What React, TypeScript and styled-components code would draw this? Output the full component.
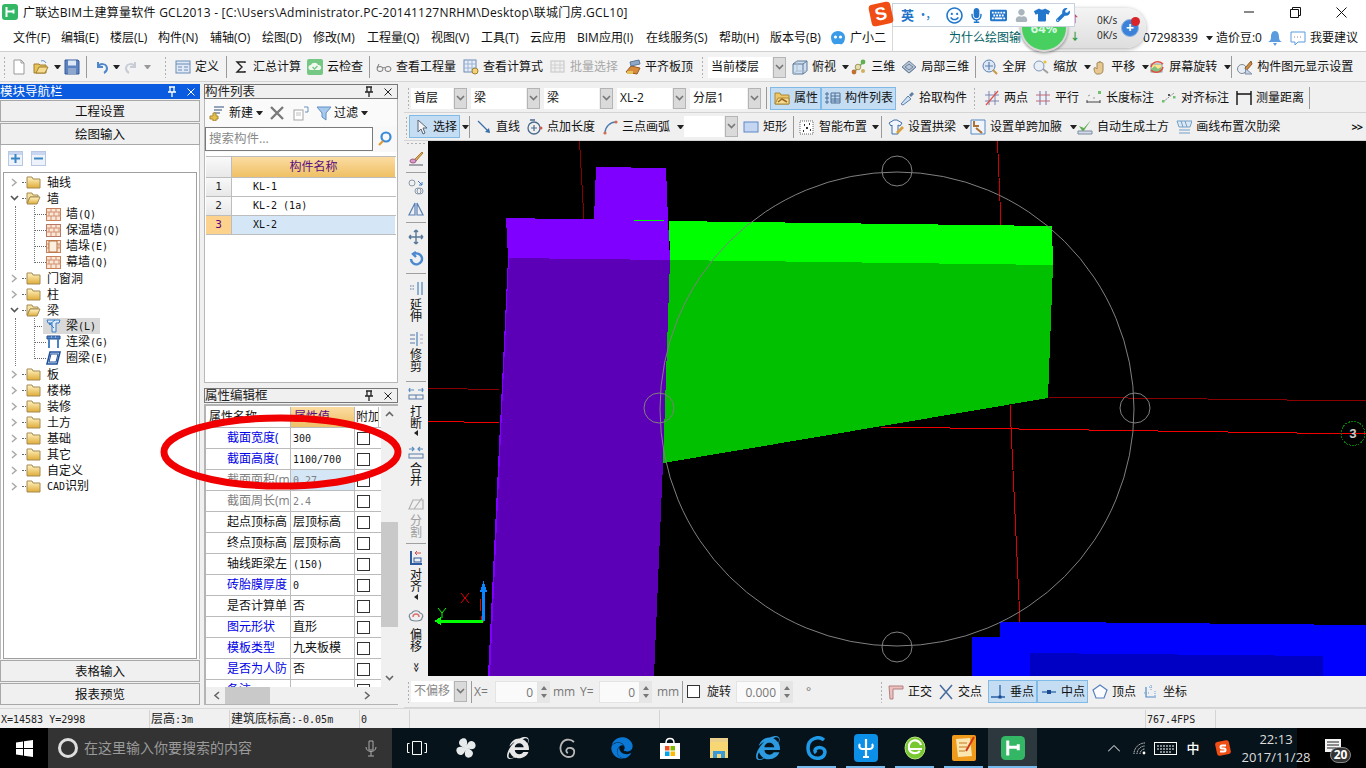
import React from "react";
import styled, { createGlobalStyle } from "styled-components";
import { FaEdge, FaInternetExplorer, FaKeyboard, FaMicrophone, FaRegSmile, FaTshirt, FaUser, FaWrench } from "react-icons/fa";

const CJK = `"Open Sans", "Noto Sans CJK SC", sans-serif`;
const MONO = `"DejaVu Sans Mono", "Noto Sans CJK SC", monospace`;

const Global = createGlobalStyle`
  html, body { margin: 0; padding: 0; overflow: hidden; background: #f0f0f0; }
  * { box-sizing: border-box; }
  svg { display: block; flex: none; }
`;

const Page = styled.div`
  position: relative; width: 1366px; height: 768px; overflow: hidden;
  display: flex; flex-direction: column; font: 12px/16px ${CJK}; color: #111; background: #f0f0f0;
`;

/* ---------- title & menu ---------- */
const TitleBar = styled.div`
  height: 24px; flex: none; display: flex; align-items: center; background: #fff; padding-left: 2px; padding-right: 2px;
`;
const TitleText = styled.div`margin-left: 5px; white-space: nowrap; font-size: 12px; letter-spacing: 0.02em; color: #111; padding-top: 1px;`;
const WinControls = styled.div`margin-left: auto; display: flex; align-items: center;`;
const WinBtn = styled.div<{ $w: number }>`width: ${p => p.$w}px; display: flex; justify-content: center;`;

const MenuBar = styled.div`
  height: 28px; flex: none; display: flex; align-items: center; background: #fff;
  padding-left: 13px; padding-top: 1px; border-bottom: 1px solid #cfcfcf; position: relative;
`;
const MenuItem = styled.div<{ $w?: number; $ml?: number }>`
  width: ${p => (p.$w ? `${p.$w}px` : "auto")}; flex: none; margin-left: ${p => p.$ml ?? 0}px; white-space: nowrap; overflow: hidden;
`;
const MenuSep = styled.div`width: 1px; height: 28px; background: #d8d8d8; margin-left: 6px;`;
const Tip = styled.div`margin-left: 56px; color: #00605f; font-size: 12px; width: 72px; white-space: nowrap; overflow: hidden;`;

/* ---------- toolbars ---------- */
const Band = styled.div<{ $h: number; $tone?: string; $pt?: number }>`
  height: ${p => p.$h}px; flex: none; display: flex; align-items: center; background: ${p => p.$tone ?? "#f3f3f3"};
  border-bottom: 1px solid #d4d4d4; white-space: nowrap; padding-top: ${p => p.$pt ?? 0}px;
`;
const Grip = styled.div<{ $ml?: number }>`
  width: 3px; height: 22px; flex: none; margin-left: ${p => p.$ml ?? 0}px;
  background-image: radial-gradient(#b0b0b0 0.8px, transparent 0.9px); background-size: 3px 4px;
`;
const Sep = styled.div<{ $ml?: number }>`
  width: 1px; height: 22px; flex: none; background: #9a9a9a; margin-left: ${p => p.$ml ?? 0}px;
`;
const Tool = styled.div<{ $ml?: number; $w?: number; $on?: boolean; $off?: boolean; $pl?: number }>`
  display: flex; align-items: center; gap: 4px; flex: none; height: 23px;
  margin-left: ${p => p.$ml ?? 0}px; width: ${p => (p.$w ? `${p.$w}px` : "auto")};
  padding-left: ${p => p.$pl ?? 0}px;
  color: ${p => (p.$off ? "#a8a8a8" : "#111")};
  background: ${p => (p.$on ? "#c4ddf3" : "transparent")};
  box-shadow: ${p => (p.$on ? "inset 0 0 0 1px #80bbe8" : "none")};
`;
const Caret = styled.div<{ $ml?: number; $off?: boolean }>`
  width: 7px; height: 4px; flex: none; margin-left: ${p => p.$ml ?? 0}px;
  border-left: 3.5px solid transparent; border-right: 3.5px solid transparent;
  border-top: 4px solid ${p => (p.$off ? "#999" : "#222")};
`;
const IconSlot = styled.div<{ $ml?: number }>`
  width: 16px; height: 16px; flex: none; margin-left: ${p => p.$ml ?? 0}px;
`;
const Combo = styled.div<{ $w: number; $ml?: number; $off?: boolean }>`
  width: ${p => p.$w}px; height: 21px; flex: none; display: flex; gap: 1px; margin-left: ${p => p.$ml ?? 0}px;
  color: ${p => (p.$off ? "#8a8a8a" : "#111")};
`;
const ComboText = styled.div`flex: 1; background: #fff; padding-left: 3px; line-height: 20px; overflow: hidden;`;
const ComboBtn = styled.div`
  width: 13px; flex: none; background: #dadada; border: 1px solid #b4b4b4; display: flex; align-items: center; justify-content: center;
`;
const Overflow = styled.div`margin-left: auto; padding-right: 4px; font: bold 11px/16px ${CJK}; letter-spacing: -1px; color: #111;`;

const Main = styled.div`height: 626px; flex: none; display: flex; padding-top: 2px; background: #f0f0f0;`;

/* ---------- panels ---------- */
const Side = styled.div<{ $w: number; $ml?: number }>`
  width: ${p => p.$w}px; flex: none; margin-left: ${p => p.$ml ?? 0}px; height: 621px; display: flex; flex-direction: column;
`;
const PanelHead = styled.div<{ $active?: boolean }>`
  height: 15px; flex: none; display: flex; align-items: center; justify-content: space-between; font-size: 12.5px; line-height: 15px;
  background: ${p => (p.$active ? "#0a5be0" : "#f0f0f0")}; color: ${p => (p.$active ? "#fff" : "#222")};
  border: ${p => (p.$active ? "none" : "1px solid #777")};
`;
const HeadBtns = styled.div`display: flex; align-items: center; gap: 9px; padding-right: 4px;`;
const NavBtn = styled.div`
  height: 22px; flex: none; display: flex; align-items: center; justify-content: center; background: #f0f0f0; padding-top: 2px;
  border: 1px solid #a8a8a8; font-size: 12.5px; margin-top: 1px;
`;
const NavBody = styled.div`
  flex: 1; background: #fff; display: flex; flex-direction: column; padding: 0 2px; border-left: 1px solid #bbb; border-right: 1px solid #bbb;
`;
const ExpandBar = styled.div`height: 27px; flex: none; display: flex; align-items: center; gap: 8px; padding-left: 5px;`;
const ExpandBtn = styled.div`
  width: 15px; height: 15px; background: linear-gradient(#c8d6f0 0 3px, #eef3fb 3px); border: 1px solid #b9c8e2; display: flex; align-items: center; justify-content: center;
`;
const TreeBox = styled.div`flex: 1; border: 1px solid #a0a0a0; padding-top: 1px; font-size: 12px;`;
const TreeRow = styled.div`height: 16px; display: flex; align-items: center; padding-left: 6px; position: relative;`;
const TreeLabel = styled.div<{ $ml: number }>`
  margin-left: ${p => p.$ml}px; line-height: 15px; white-space: nowrap;
`;
const LeadH = styled.div<{ $w: number; $ml?: number }>`
  width: ${p => p.$w}px; height: 0; border-top: 1px dotted #666; margin-left: ${p => p.$ml ?? 0}px; flex: none;
`;
const Group = styled.div`
  position: relative;
  &::before { content: ""; position: absolute; left: 11px; top: 0; bottom: 0; border-left: 1px dotted #777; }
  &::after { content: ""; position: absolute; left: 30px; top: 0; bottom: 7px; border-left: 1px dotted #777; }
`;
const ChildRow = styled.div`height: 16px; display: flex; align-items: center; padding-left: 30px; position: relative;`;
const ChildPlate = styled.div<{ $sel?: boolean }>`
  display: flex; align-items: center; height: 16px; padding-right: ${p => (p.$sel ? 4 : 0)}px; padding-left: ${p => (p.$sel ? 3 : 0)}px;
  margin-left: ${p => (p.$sel ? -3 : 0)}px; background: ${p => (p.$sel ? "#d9d9d9" : "transparent")};
`;
const Lat = styled.span`font: 10px/15px ${MONO};`;

const ListPanel = styled.div`
  height: 284px; flex: none; background: #fff; border: 1px solid #b8b8b8; border-top: none; display: flex; flex-direction: column;
`;
const MiniBar = styled.div`height: 27px; flex: none; display: flex; align-items: center; padding-left: 4px; background: #fafafa;`;
const SearchRow = styled.div`height: 26px; flex: none; display: flex; align-items: center; background: #f8f8f8;`;
const SearchInput = styled.div`
  width: 168px; height: 24px; border: 1px solid #7a7a7a; color: #8a8a8a; padding-left: 3px; line-height: 22px; background: #fff; font-size: 12.5px;
`;
const SearchBtn = styled.div`flex: 1; display: flex; justify-content: center;`;
const ListGrid = styled.div`margin: 4px 1px 0 1px; border-top: 1px solid #bbb;`;
const ListRow = styled.div<{ $h: number }>`display: grid; grid-template-columns: 26px 163px; height: ${p => p.$h}px; border-bottom: 1px solid #bdbdbd;`;
const IndexCell = styled.div<{ $sel?: boolean; $head?: boolean }>`
  background: ${p => (p.$sel ? "#fcd28c" : p.$head ? "linear-gradient(#fafafa,#e8e8e8)" : "linear-gradient(#f8f8f8,#e8e8e8)")};
  color: ${p => (p.$sel ? "#600080" : "#222")}; text-align: center; border-right: 1px solid #bdbdbd; font: 11px/18px ${MONO};
`;
const NameHead = styled.div`
  background: linear-gradient(#fbdca2, #efc064); color: #5a0f80; text-align: center; line-height: 20px; font-size: 12px;
`;
const NameCell = styled.div<{ $sel?: boolean }>`
  padding-left: 21px; font: 10px/18px ${MONO}; background: ${p => (p.$sel ? "#d5e7f7" : "#fff")}; white-space: pre;
`;
const Gap = styled.div`height: 5px; flex: none;`;
const PropBox = styled.div`
  flex: 1; margin-top: 1px; border: 2px solid #b4b4b4; background: #fff; display: grid;
  grid-template-columns: 175px 17px; grid-template-rows: 281px 17px; min-height: 0;
`;
const PropRows = styled.div`overflow: hidden; background: #fff; padding-top: 1px;`;
const PropRow = styled.div`
  display: grid; grid-template-columns: 85px 64px 24px; height: 21px; border-bottom: 1px solid #bbb;
`;
const HeadLabel = styled.div<{ $pl?: number }>`padding-left: ${p => p.$pl ?? 3}px; line-height: 20px; border-right: 1px solid #bbb; white-space: nowrap; overflow: hidden;`;
const HeadValue = styled.div`
  padding-left: 3px; line-height: 20px; color: #5a0f80; background: linear-gradient(#fbdca2, #efc064); border-right: 1px solid #bbb;
`;
const PropLabel = styled.div<{ $tone?: string }>`
  padding-left: 21px; line-height: 20px; color: ${p => p.$tone ?? "#111"}; white-space: nowrap; overflow: hidden; border-right: 1px solid #bbb;
`;
const PropValue = styled.div<{ $tone?: string; $bg?: string }>`
  padding-left: 2px; line-height: 20px; color: ${p => p.$tone ?? "#111"}; background: ${p => p.$bg ?? "#fff"}; white-space: nowrap; overflow: hidden; border-right: 1px solid #bbb;
`;
const PropCheck = styled.div`display: flex; align-items: center; padding-left: 2px; overflow: hidden;`;
const Check = styled.div`width: 13px; height: 13px; flex: none; border: 1px solid #333; background: #fff;`;
const VScroll = styled.div`background: #f0f0f0; display: flex; flex-direction: column; align-items: center; position: relative;`;
const ScrollArrow = styled.div<{ $auto?: boolean }>`height: 17px; flex: none; width: 100%; display: flex; align-items: center; justify-content: center; margin-top: ${p => (p.$auto ? "auto" : "0")};`;
const VThumb = styled.div`width: 100%; height: 105px; background: #c9c9c9; margin-top: 99px;`;
const HScroll = styled.div`background: #f0f0f0; display: flex; align-items: center; grid-column: 1; padding-left: 3px;`;
const HThumb = styled.div`width: 45px; height: 100%; background: #c9c9c9;`;
const HArrow = styled.div<{ $auto?: boolean }>`width: 16px; flex: none; margin-left: ${p => (p.$auto ? "auto" : "0")}; display: flex; justify-content: center; margin-right: ${p => (p.$auto ? "6px" : "0")};`;
const Corner = styled.div`background: #f0f0f0;`;

/* ---------- work area ---------- */
const Work = styled.div`flex: 1; display: flex; flex-direction: column; min-width: 0; margin-left: 6px;`;
const WorkMid = styled.div`height: 535px; flex: none; display: flex;`;
const VBar = styled.div`width: 24px; flex: none; background: #f0f0f0; display: flex; flex-direction: column; align-items: center;`;
const VGrip = styled.div`
  width: 20px; height: 3px; flex: none; margin-top: 1px;
  background-image: radial-gradient(#b0b0b0 0.8px, transparent 0.9px); background-size: 4px 3px;
`;
const VSep = styled.div<{ $mt: number }>`width: 20px; height: 1px; flex: none; background: #a0a0a0; margin-top: ${p => p.$mt}px;`;
const VIcon = styled.div<{ $mt: number }>`width: 16px; height: 16px; flex: none; margin-top: ${p => p.$mt}px;`;
const VText = styled.div<{ $mt: number; $off?: boolean }>`
  width: 12px; flex: none; font-size: 12px; line-height: 12px; margin-top: ${p => p.$mt}px; color: ${p => (p.$off ? "#a0a0a0" : "#111")}; text-align: center; word-break: break-all;
`;
const LeftTri = styled.div<{ $mt?: number }>`
  width: 0; height: 0; flex: none; margin-top: ${p => p.$mt ?? 0}px; border-top: 3px solid transparent; border-bottom: 3px solid transparent; border-right: 4px solid #222;
`;
const More = styled.div<{ $mt: number }>`margin-top: ${p => p.$mt}px; font: bold 9px/8px ${CJK}; transform: rotate(90deg); letter-spacing: -1px;`;
const CanvasSvg = styled.svg`width: 938px; height: 535px; background: #000;`;
const Label = styled.div<{ $w: number; $ml?: number; $tone?: string }>`
  width: ${p => p.$w}px; flex: none; margin-left: ${p => p.$ml ?? 0}px; color: ${p => p.$tone ?? "#777"};
`;
const Spin = styled.div<{ $w: number; $ml?: number }>`
  width: ${p => p.$w}px; height: 22px; flex: none; margin-left: ${p => p.$ml ?? 0}px; display: flex; color: #777;
`;
const SpinValue = styled.div`flex: 1; background: #fafafa; text-align: right; padding-right: 4px; line-height: 21px; border: 1px solid #e4e4e4;`;
const SpinBtns = styled.div`width: 12px; background: #e6e6e6; display: flex; flex-direction: column; align-items: center; justify-content: space-around; padding: 3px 0;`;
const SpinTri = styled.div<{ $up?: boolean }>`
  width: 0; height: 0; border-left: 3px solid transparent; border-right: 3px solid transparent;
  ${p => (p.$up ? "border-bottom: 4px solid #777;" : "border-top: 4px solid #777;")}
`;
const SmallBox = styled.div<{ $ml?: number }>`width: 13px; height: 13px; flex: none; border: 1.5px solid #333; background: #fff; margin-left: ${p => p.$ml ?? 0}px;`;

/* ---------- status ---------- */
const Status = styled.div`height: 20px; flex: none; display: flex; align-items: center; background: #f0f0f0; border-top: 1px solid #d8d8d8; white-space: nowrap;`;
const StatusCell = styled.div<{ $w: number }>`
  width: ${p => p.$w}px; flex: none; height: 18px; padding-left: 1px; line-height: 18px; border-right: 1px solid #d4d4d4; overflow: hidden; font-size: 12px; color: #222;
`;

/* ---------- taskbar ---------- */
const Taskbar = styled.div`height: 40px; flex: none; display: flex; align-items: stretch; background: #07131a; color: #e8e8e8;`;
const StartBtn = styled.div`width: 48px; flex: none; background: #000; display: flex; align-items: center; justify-content: center;`;
const SearchBox = styled.div`
  width: 344px; flex: none; background: #333; display: flex; align-items: center; padding-left: 10px; color: #9a9a9a; font-size: 14px;
`;
const Ring = styled.div`width: 20px; height: 20px; flex: none; border-radius: 50%; border: 3px solid #ddd;`;
const SearchHint = styled.div`margin-left: 6px; width: 281px; white-space: nowrap;`;
const Slot = styled.div<{ $ml?: number; $under?: boolean; $active?: boolean }>`
  width: 49px; flex: none; margin-left: ${p => p.$ml ?? 0}px; position: relative; display: flex; align-items: center; justify-content: center;
  background: ${p => (p.$active ? "#2c383d" : "transparent")};
  &::after {
    content: ""; position: absolute; bottom: 0; height: 2px; left: ${p => (p.$active ? 0 : 5)}px; right: ${p => (p.$active ? 0 : 5)}px;
    background: ${p => (p.$under || p.$active ? "#76b9ed" : "transparent")};
  }
`;
const Tray = styled.div<{ $ml: number; $w: number }>`
  width: ${p => p.$w}px; flex: none; margin-left: ${p => p.$ml}px; display: flex; align-items: center; justify-content: center;
`;
const Han = styled.div`font-size: 13px; color: #fff; font-weight: 500;`;
const Clock = styled.div`
  width: 70px; flex: none; margin-left: 9px; text-align: center; font-size: 13px; line-height: 18px; padding-top: 2px; color: #ddd; white-space: nowrap; position: relative; z-index: 1;
`;
const Notify = styled.div`flex: 1; background: #000; position: relative; display: flex; align-items: center; padding: 0 0 5px 28px; margin-left: -14px;`;
const Badge = styled.div`
  position: absolute; left: 33px; top: 19px; width: 21px; height: 16px; border-radius: 8px; background: #333; border: 1px solid #888;
  color: #fff; font: bold 12px/14px ${CJK}; text-align: center;
`;

/* ---------- overlays ---------- */
const SogouLogo = styled.div`
  position: absolute; left: 870px; top: 3px; width: 22px; height: 22px; background: #f04e14; border-radius: 4px; transform: rotate(-12deg);
  color: #fff; font: 900 18px/22px "Liberation Sans", sans-serif; text-align: center; z-index: 5;
`;
const SogouBar = styled.div`
  position: absolute; left: 892px; top: 3px; width: 183px; height: 24px; background: #fdfeff; border: 1px solid #c8d2dc;
  display: flex; align-items: center; color: #2277cc; z-index: 4; padding-left: 8px;
`;
const SogouItem = styled.div<{ $w: number }>`width: ${p => p.$w}px; flex: none; display: flex; justify-content: center; align-items: center;`;
const SogouEn = styled.div`font-size: 13px; font-weight: 700; color: #1f73c8; width: 16px;`;
const NetPill = styled.div`
  position: absolute; left: 1024px; top: 8px; width: 122px; height: 40px; border-radius: 20px; background: linear-gradient(#f4f4f4, #dedede);
  box-shadow: 0 1px 4px rgba(0,0,0,.35); z-index: 2; display: flex; flex-direction: column; align-items: flex-start; justify-content: center; padding-left: 73px;
  font: 10px/15px ${CJK}; color: #222;
`;
const NetBall = styled.div`
  position: absolute; left: -4px; top: -4px; width: 48px; height: 48px; border-radius: 50%; background: #47cf5f; border: 2px solid #d8d8d8;
  box-shadow: 0 1px 3px rgba(0,0,0,.4); color: #d8f8e0; font: 700 13px/44px ${CJK}; text-align: center;
`;
const NetArrow = styled.div<{ $top: number; $c: string }>`
  position: absolute; left: 46px; top: ${p => p.$top}px; font: bold 10px/10px ${CJK}; color: ${p => p.$c};
`;
const NetPlus = styled.div`
  position: absolute; right: 7px; top: 11px; width: 18px; height: 18px; border-radius: 50%; background: #3c82d8; border: 1px solid #8fb4df; color: #fff;
  font: bold 14px/15px ${CJK}; text-align: center;
`;
const NetDot = styled.div`position: absolute; right: 6px; top: 9px; width: 9px; height: 9px; border-radius: 50%; background: #d8232a;`;
const Ellipse = styled.svg`position: absolute; left: 150px; top: 405px; width: 260px; height: 95px; z-index: 6; pointer-events: none;`;

/* ---------- icons ---------- */
const S = (c: string, w = 1) => ({ fill: "none", stroke: c, strokeWidth: w });
const ICONS: Record<string, React.ReactNode> = {
  doc: <><path d="M3 1h7l3 3v11H3z" fill="#fff" stroke="#999" /><path d="M10 1v3h3" {...S("#999")} /></>,
  open: <><path d="M1 5h5l1 1h6v8H1z" fill="#e8c25a" stroke="#a08030" /><path d="M3 14l3-6h9l-3 6z" fill="#f6dc90" stroke="#a08030" /><path d="M8 2c2-1 4 0 5 2" {...S("#5a90d0")} /></>,
  save: <><path d="M1 1h13l1 1v13H1z" fill="#5d82c2" stroke="#3a5a98" /><rect x="4" y="1.5" width="8" height="5" fill="#dfe8f6" /><rect x="4" y="9" width="8" height="6" fill="#8fa6cd" /></>,
  undo: <path d="M4 3v5h5M4 8c2-4 8-4 9 1 0 2-1 4-3 5" {...S("#4f86cc", 2)} />,
  redo: <path d="M12 3v5H7M12 8c-2-4-8-4-9 1 0 2 1 4 3 5" {...S("#c8ccd4", 2)} />,
  define: <><rect x="1" y="2" width="14" height="12" fill="#dfe8f4" stroke="#6a8db8" /><path d="M1 5h14M3 8h4M3 11h4M9 8h4M9 11h4" {...S("#6a8db8")} /></>,
  sigma: <path d="M12 4V3H4l5 5-5 5h8v-1" {...S("#222", 1.4)} />,
  cloud: <><rect x="0" y="0" width="16" height="16" rx="2" fill="#74c884" /><path d="M4 11a2.5 2.5 0 0 1 0-5c1-3 6-3 7 0a2.5 2.5 0 0 1 1 5z" fill="#f2f8ef" /><path d="M5.5 8l2 2 3-3" {...S("#74c884", 1.3)} /></>,
  glasses: <><ellipse cx="4" cy="10" rx="3" ry="2.5" {...S("#777")} /><ellipse cx="12" cy="10" rx="3" ry="2.5" {...S("#777")} /><path d="M7 9c1-1 1-1 2 0M1 9l2-4" {...S("#777")} /></>,
  calc: <><rect x="1" y="1" width="12" height="12" fill="#e8eef8" stroke="#6c8ab5" /><path d="M1 5h12M1 9h12M5 1v12M9 1v12" {...S("#9db3d4")} /><circle cx="12" cy="12" r="3" fill="#f2d27a" stroke="#a08030" /></>,
  batch: <><rect x="1" y="2" width="13" height="11" fill="#f0f0f0" stroke="#c4c4c4" /><path d="M1 6h13M1 9h13M5 2v11M10 2v11" {...S("#d0d0d0")} /></>,
  flat: <><path d="M1 13l5-6 9 2-3 6z" fill="#d88b3c" stroke="#96591e" /><path d="M5 3l9-2 1 4-9 2z" fill="#8fa8c8" stroke="#5a7698" /><rect x="2" y="12" width="6" height="3" fill="#e6c25a" /></>,
  cube: <><path d="M1 5l4-3h10v10l-4 3H1z" fill="#cfe0f2" stroke="#5f7895" /><path d="M1 5h10v10M11 5l4-3" {...S("#5f7895")} /><path d="M1 15l4-3V2M5 12h10" {...S("#aabccd")} /></>,
  view3d: <><path d="M3 13l5-5 4-5" {...S("#7a7", 1.5)} /><circle cx="12" cy="3" r="2.4" fill="#60b050" /><circle cx="7" cy="8" r="2.8" fill="#e6e0a8" stroke="#a09860" /><circle cx="3" cy="13" r="2.4" fill="#c07030" /><circle cx="12" cy="12" r="2" fill="#d0b060" /></>,
  part3d: <><path d="M1 8l7-6 7 6-7 6z" fill="#b8c8da" stroke="#6d8199" /><path d="M4 8l4-3 4 3-4 3zM1 8l7 6 7-6" {...S("#6d8199")} /></>,
  full: <><circle cx="7" cy="7" r="6" fill="#dce8f8" stroke="#5f80ad" /><path d="M7 3v8M3 7h8" {...S("#5f80ad", 1.2)} /><path d="M11 11l4 4" {...S("#c89a40", 2)} /></>,
  zoom: <><circle cx="6" cy="7" r="5" fill="#e8eef6" stroke="#8098b8" /><path d="M10 10l5 4" {...S("#a0a0a0", 2)} /><circle cx="12" cy="3" r="1.6" fill="#e6c43a" /></>,
  pan: <><path d="M3 9c1-1 2 0 3 1V4c1-1 2-1 2 0V3c1-1 2 0 2 0v1c1-1 2 0 2 1v6c0 3-2 4-4 4H6c-2 0-3-3-3-6z" fill="#e8c890" stroke="#a08858" /></>,
  spin: <><rect x="2" y="5" width="11" height="8" fill="#ffe28a" stroke="#80a0c0" /><path d="M2 10l4-3 3 3 3-2v5H2z" fill="#80c080" /><path d="M2 8a7 7 0 0 1 12-3M14 8a7 7 0 0 1-12 3" {...S("#e05040", 1.5)} /></>,
  display: <><circle cx="5" cy="10" r="4.5" fill="#e8eef6" stroke="#808890" /><path d="M8 9l6-7 1 3-6 7z" fill="#d88a3c" stroke="#806030" /><path d="M9 10l6 5H8z" fill="#c8d4e4" stroke="#8090a8" /></>,
  prop: <><path d="M1 3h5l1 2h8v9H1z" fill="#efc768" stroke="#a88838" /><path d="M1 14l3-6h11v6z" fill="#f6dc90" stroke="#a88838" /><path d="M4 12l4-3 5 3" {...S("#a06820", 1.5)} /></>,
  list: <><path d="M1 3h2v2H1zM1 7h2v2H1zM1 11h2v2H1zM6 3h9v10H6z" {...S("#4e6f96")} /><path d="M6 6h9M6 9h9M6 11h9M10 3v10" {...S("#4e6f96")} /></>,
  pick: <><path d="M2 14l7-8 3 3-8 6z" fill="#cfe0f4" stroke="#5c7fa8" /><path d="M10 5l3-3 2 2-3 3z" fill="#5c7fa8" /></>,
  two: <><path d="M5 1v14M11 1v14M1 5h14M1 11h14" {...S("#7d86b3")} /><path d="M2 15L14 1" {...S("#e0504a", 1.2)} /></>,
  par: <><path d="M5 1v14M11 1v14" {...S("#6a6fb0")} /><path d="M1 5h14M1 11h14" {...S("#c06a78")} /></>,
  lenm: <><path d="M1 13v-3M14 13v-3M1 12h13" {...S("#444")} /><path d="M2 6l2-1M7 8h2" {...S("#999")} /><rect x="12" y="1" width="3" height="3" fill="#70c070" /></>,
  alim: <><path d="M2 12L13 3" {...S("#888")} strokeDasharray="2 1" /><rect x="1" y="10" width="2.5" height="2.5" fill="#70c070" /><rect x="12" y="6" width="2.5" height="2.5" fill="#70c070" /><rect x="7" y="4" width="2" height="2" fill="#555" /></>,
  meas: <path d="M1 1v14M15 1v14M1 4h14" {...S("#111", 1.4)} />,
  select: <path d="M5 1v12l3-3 2 5 2-1-2-5h4z" fill="#f4f6fa" stroke="#5a6470" />,
  line: <><path d="M2 2l11 11" {...S("#3a6ea8", 1.3)} /><path d="M14 14l-5-1 4-4z" fill="#3a6ea8" /></>,
  addl: <><circle cx="7" cy="9" r="6" {...S("#4c6a8c", 1.3)} /><path d="M7 6v6M4 9h6" {...S("#4c6a8c", 1.2)} /><path d="M3 1h5" {...S("#4c6a8c", 1.5)} /><circle cx="14" cy="9" r="1.5" fill="#d05a4a" /></>,
  arc: <><path d="M3 14C3 8 8 3 14 3" {...S("#4e7fb2", 1.3)} /><circle cx="3" cy="14" r="1.6" fill="#d07050" /><circle cx="14" cy="3" r="1.6" fill="#d07050" /></>,
  rect: <rect x="1" y="3" width="14" height="10" fill="#c4d6f2" stroke="#5e86c6" />,
  smart: <><rect x="1" y="2" width="13" height="13" fill="#fff" stroke="#666" strokeDasharray="1 1" /><path d="M5 6h1M10 5h1M7 9h2M4 12h1M11 11h1" {...S("#333", 2)} /></>,
  arch: <><path d="M1 4l5-3h3l5 3-2 3-2-1v9H4V6L3 7z" fill="#f2f6fc" stroke="#3f70a8" /><path d="M8 13l6-6 2 2-6 6z" fill="#d8a040" /></>,
  haunch: <><path d="M1 1h14v14H1z" fill="#eef4fc" stroke="#5a88c0" /><path d="M4 2v5h5M6 9l6 5" {...S("#b0702e", 2)} /></>,
  auto: <><path d="M2 7l4 6L14 1l-7 8z" fill="#60ac50" /><path d="M1 12h14v3H1z" fill="#d4dce8" stroke="#7a8ca0" /></>,
  rib: <><path d="M1 2h15l-2 6H3z" fill="#dce8f4" stroke="#72a0c8" /><path d="M3 14h11M5 2l2 6M9 2l2 6M3 11h11" {...S("#72a0c8")} /></>,
  ortho: <><path d="M1 2h14v3H5v10H2z" fill="#efc0c0" stroke="#b08080" /></>,
  cross: <path d="M2 1l12 14M14 1L2 15" {...S("#4a6fa0", 1.6)} />,
  perp: <><path d="M10 1v12M1 13h14" {...S("#2a62a8", 1.3)} /><rect x="8.5" y="11.5" width="3" height="3" fill="#1a4a90" /></>,
  mid: <><path d="M1 8h14" {...S("#2a62a8", 1.3)} /><rect x="6" y="6" width="4" height="4" fill="#1a4a90" /></>,
  vert: <path d="M8 1l7 5-3 8H4L1 6z" fill="#fafcff" stroke="#5682c0" strokeWidth="1.2" />,
  coord: <><path d="M3 3v10h10" {...S("#508cc8", 1.2)} /><path d="M8 1v5M6 3h4M12 7v5M1 9h5" {...S("#6aa0d8")} strokeDasharray="1 1" /></>,
  newb: <><path d="M5 2h10M5 5h8M5 8h6" {...S("#7488a4", 1.3)} /><path d="M4 8v3H1v3h3v2h3v-2h2v-3H7V8z" fill="#e6c04c" stroke="#a88830" /></>,
  del: <path d="M2 2l12 12M14 2L2 14" {...S("#7a7a7a", 2.4)} />,
  copy: <><rect x="1" y="5" width="9" height="10" fill="#fff" stroke="#a4a4a4" /><path d="M3 8h5M3 10h5" {...S("#c0c0c0")} /><path d="M11 2h4v5h-3" {...S("#6f92bd")} /></>,
  filter: <path d="M1 2h14l-5 6v7l-4-3V8z" fill="#a8c8ec" stroke="#5f8fc4" />,
  mag: <><circle cx="9" cy="6" r="4.5" {...S("#3b8ad8", 2.2)} /><path d="M6 10l-4 4" {...S("#e09a30", 2.2)} /></>,
  brush: <><path d="M6 10l8-8 1 1-7 8z" fill="#e0a860" stroke="#a87a30" /><ellipse cx="5" cy="11" rx="3" ry="2" fill="#d89ad0" stroke="#a06080" /><path d="M1 15h14" {...S("#556")} /></>,
  circ: <><circle cx="4" cy="4" r="3" {...S("#8a9aac")} /><circle cx="10" cy="12" r="3" {...S("#8a9aac")} /><circle cx="12" cy="12" r="3" {...S("#8a9aac")} /><path d="M10 2l4 4M14 3v3h-3" {...S("#3e78c4")} /></>,
  mirror: <><path d="M7 2v12H1zM9 2v12h6z" {...S("#5880b8", 1.2)} /></>,
  move: <path d="M8 1v14M1 8h14M8 1L6 3M8 1l2 2M8 15l-2-2M8 15l2-2M1 8l2-2M1 8l2 2M15 8l-2-2M15 8l-2 2" {...S("#587898", 1.4)} />,
  rot: <path d="M3 8a5.5 5.5 0 1 0 3-5M8 1L5 3l3 3" {...S("#4a88d0", 2.4)} />,
  ext: <><path d="M2 5h5M2 8h5" {...S("#5a7aa8")} strokeDasharray="1.5 1" /><path d="M10 1v13M14 1v13" {...S("#5a8cc0", 1.3)} /></>,
  trim: <><path d="M2 4h5M2 8h5M2 12h5" {...S("#5a7aa8")} /><path d="M9 1v14" {...S("#5a8cc0", 1.3)} /><path d="M12 4h3M12 8h3M12 12h3" {...S("#aac")} /></>,
  brk: <><path d="M1 4h5M10 4h5M2 2L1 4l1 2M14 2l1 2-1 2" {...S("#5a8cc0", 1.2)} /><rect x="1" y="9" width="14" height="4" {...S("#5a7aa8")} /><path d="M8 9v4" {...S("#5a7aa8")} /></>,
  merge: <><path d="M1 4h5M15 4h-5M4 2l2 2-2 2M12 2l-2 2 2 2" {...S("#5a8cc0", 1.2)} /><rect x="1" y="9" width="14" height="4" {...S("#5a7aa8")} /></>,
  split: <><path d="M1 14l4-9h10v9zM6 14l8-11" {...S("#b0b0b0", 1.2)} /></>,
  align: <><path d="M3 1v14M3 14h11" {...S("#2e5aa0", 2)} /><path d="M13 3H7M9 1L7 3l2 2" {...S("#d05050")} /><rect x="6" y="8" width="7" height="4" {...S("#2e5aa0")} /></>,
  offs: <><path d="M2 10a3 3 0 0 1 2-5c1-3 7-3 8 0a3 3 0 0 1 2 5c0 2-2 3-6 3s-6-1-6-3z" {...S("#7a8898", 1.2)} /><path d="M5 9c0-4 6-4 6 0" {...S("#e07070", 1.5)} /></>,
  close: <path d="M1.5 1.5l7 7M8.5 1.5l-7 7" {...S("currentColor", 1)} />,
};
const Ico = ({ n, s = 16 }: { n: string; s?: number }) => (
  <svg width={s} height={s} viewBox="0 0 16 16">{ICONS[n]}</svg>
);
const Chevron = ({ dir = "down", c = "#777" }: { dir?: string; c?: string }) => {
  const d = { down: "M1 2l3.5 3.5L8 2", up: "M1 6l3.5-3.5L8 6", left: "M6 1L2 4.5 6 8", right: "M2 1l4 3.5L2 8" }[dir]!;
  return <svg width="9" height="9" viewBox="0 0 9 9"><path d={d} fill="none" stroke={c} strokeWidth="1.6" /></svg>;
};
const Pin = () => (
  <HeadBtns>
    <svg width="10" height="12" viewBox="0 0 10 12"><path d="M2 1h6M3 1v5M7 1v5M1 6h8M5 6v5" fill="none" stroke="currentColor" strokeWidth="1.3" /></svg>
    <svg width="10" height="10" viewBox="0 0 10 10">{ICONS.close}</svg>
  </HeadBtns>
);
const FolderIcon = ({ open }: { open?: boolean }) => (
  <svg width="15" height="13" viewBox="0 0 15 13">
    <defs><linearGradient id="fy" x1="0" y1="0" x2="0" y2="1"><stop offset="0" stopColor="#fff4c4" /><stop offset="1" stopColor="#e0ac38" /></linearGradient></defs>
    {open
      ? <><path d="M1 1h5l1 2h5v2H4L1 11z" fill="#f6e2a0" stroke="#a48a50" /><path d="M4 5h10l-3 7H1z" fill="url(#fy)" stroke="#a48a50" /></>
      : <><path d="M1 1h5l1 2h7v9H1z" fill="url(#fy)" stroke="#a48a50" /></>}
  </svg>
);
const WallIcon = ({ v = 0 }: { v?: number }) => (
  <svg width="15" height="13" viewBox="0 0 15 13">
    <rect x="0.5" y="0.5" width="14" height="12" fill="#fbe6d6" stroke={v === 1 ? "#b87868" : "#c88058"} />
    <path d="M1 4h14M1 8h14M5 1v3M10 1v3M3 4v4M8 4v4M13 4v4M5 8v4M10 8v4" fill="none" stroke="#d09070" />
    {v === 2 && <rect x="3" y="1" width="8" height="11" fill="#fbf0e0" stroke="#b87040" />}
  </svg>
);
const BeamIcon = ({ v = 0 }: { v?: number }) => (
  <svg width="15" height="14" viewBox="0 0 15 14">
    {v === 0 && <><path d="M1 1h13l-1 3h-3v9H6V4H2z" fill="#dcecfa" stroke="#3a7ac4" /><path d="M3 4l5 5M9 1l-6 5" fill="none" stroke="#3a7ac4" /></>}
    {v === 1 && <><path d="M1 1h13v3H1z" fill="#4a82c8" stroke="#26508c" /><path d="M3 4v9M12 4v9" fill="none" stroke="#4a82c8" strokeWidth="2" /><path d="M5 2h1M9 2h1" stroke="#dde" /></>}
    {v === 2 && <><path d="M4 1h10l-3 12H1z" fill="#dcecfa" stroke="#20509c" strokeWidth="1.6" /><path d="M5 3h7l-2 8H3z" fill="#fff" stroke="#20509c" /></>}
  </svg>
);

/* ---------- data ---------- */
const MENU: [string, number][] = [["文件(F)", 48], ["编辑(E)", 49], ["楼层(L)", 48], ["构件(N)", 52], ["辅轴(O)", 52], ["绘图(D)", 51], ["修改(M)", 54], ["工程量(Q)", 64], ["视图(V)", 50], ["工具(T)", 49], ["云应用", 47], ["BIM应用(I)", 69], ["在线服务(S)", 73], ["帮助(H)", 51], ["版本号(B)", 60]];

type Row = { t: string; open?: boolean; kids?: { l: React.ReactNode; i: React.ReactNode; sel?: boolean }[] };
const TREE: Row[] = [
  { t: "轴线" },
  { t: "墙", open: true, kids: [
    { l: <>墙<Lat>(Q)</Lat></>, i: <WallIcon /> },
    { l: <>保温墙<Lat>(Q)</Lat></>, i: <WallIcon v={1} /> },
    { l: <>墙垛<Lat>(E)</Lat></>, i: <WallIcon v={2} /> },
    { l: <>幕墙<Lat>(Q)</Lat></>, i: <WallIcon /> },
  ] },
  { t: "门窗洞" },
  { t: "柱" },
  { t: "梁", open: true, kids: [
    { l: <>梁<Lat>(L)</Lat></>, i: <BeamIcon />, sel: true },
    { l: <>连梁<Lat>(G)</Lat></>, i: <BeamIcon v={1} /> },
    { l: <>圈梁<Lat>(E)</Lat></>, i: <BeamIcon v={2} /> },
  ] },
  { t: "板" }, { t: "楼梯" }, { t: "装修" }, { t: "土方" },
  { t: "基础" }, { t: "其它" }, { t: "自定义" },
];

const BLUE = "#0000e6", GRAY = "#808080";
const PROPS: { l: string; v: React.ReactNode; tl?: string; tv?: string; bg?: string }[] = [
  { l: "截面宽度(", v: <Lat>300</Lat>, tl: BLUE },
  { l: "截面高度(", v: <Lat>1100/700</Lat>, tl: BLUE },
  { l: "截面面积(m", v: <Lat>0.27</Lat>, tl: GRAY, tv: GRAY, bg: "#d5e7f7" },
  { l: "截面周长(m", v: <Lat>2.4</Lat>, tl: GRAY, tv: GRAY },
  { l: "起点顶标高", v: "层顶标高" },
  { l: "终点顶标高", v: "层顶标高" },
  { l: "轴线距梁左", v: <Lat>(150)</Lat> },
  { l: "砖胎膜厚度", v: <Lat>0</Lat>, tl: BLUE },
  { l: "是否计算单", v: "否" },
  { l: "图元形状", v: "直形", tl: BLUE },
  { l: "模板类型", v: "九夹板模", tl: BLUE },
  { l: "是否为人防", v: "否", tl: BLUE },
  { l: "备注", v: "", tl: BLUE },
];

const ToolC = (p: { i: string; t: string; ml?: number; on?: boolean; off?: boolean; w?: number; pl?: number }) => (
  <Tool $ml={p.ml} $on={p.on} $off={p.off} $w={p.w} $pl={p.pl}><Ico n={p.i} /><span>{p.t}</span></Tool>
);
const ComboC = (p: { t: string; w: number; ml?: number; off?: boolean }) => (
  <Combo $w={p.w} $ml={p.ml} $off={p.off}><ComboText>{p.t}</ComboText><ComboBtn><Chevron /></ComboBtn></Combo>
);
const SpinC = (p: { v: string; w: number; ml?: number }) => (
  <Spin $w={p.w} $ml={p.ml}><SpinValue>{p.v}</SpinValue><SpinBtns><SpinTri $up /><SpinTri /></SpinBtns></Spin>
);

const Logo = ({ s = 16 }: { s?: number }) => (
  <svg width={s} height={s} viewBox="0 0 16 16">
    <rect width="16" height="16" rx="3" fill="#33b765" />
    <path d="M4.5 3v10M4.5 7.5h7.5M11.5 5.5v4" fill="none" stroke="#fff" strokeWidth="2" />
  </svg>
);

const Canvas = () => (
  <CanvasSvg viewBox="0 0 938 535" shapeRendering="crispEdges">
    <path d="M151.5 0L156 79" stroke="#8a0000" fill="none" />
    <path d="M569.5 0L573 84" stroke="#d00000" fill="none" />
    <path d="M582 264L592 481" stroke="#e00000" fill="none" />
    <path d="M0 247.4L71 248.5M620 256L938 260" stroke="#8a0000" fill="none" />
    <path d="M0 280.5L71 281.5M452 286L938 293" stroke="#f00000" fill="none" />
    <path d="M572 480.5L938 484V535H544V495.5H572z" fill="#0000ff" />
    <path d="M602 512L895 515V535H602z" fill="#0000c4" />
    <path d="M168 26L238 27L240 79L242 119L80 117L78 77L166 78.5z" fill="#8000ff" />
    <path d="M80 117L242 119L235 322L226 535H60z" fill="#5c00b8" />
    <path d="M80 117L60 535H62L81 117z" fill="#8000ff" />
    <path d="M241 80L624 85L625 124L242 119z" fill="#00ff00" />
    <path d="M242 119L625 124L620 257L235 322z" fill="#00c000" />
    <path d="M206 79H236" stroke="#00ff00" />
    <g fill="none" stroke="#808080" shapeRendering="geometricPrecision">
      <circle cx="469" cy="268" r="237" />
      <circle cx="469" cy="30" r="15" />
      <circle cx="231" cy="267" r="15" />
      <circle cx="707" cy="267" r="15" />
      <circle cx="469" cy="506" r="15" />
    </g>
    <circle cx="925" cy="292.5" r="12" fill="none" stroke="#007a00" strokeDasharray="2 1" />
    <text x="921" y="297" fill="#ccc" fontFamily="Liberation Mono" fontSize="13" fontWeight="700">3</text>
    <path d="M53 475V480H55.5" stroke="#e00000" fill="none" />
    <path d="M52 458V470" stroke="#e00000" fill="none" />
    <path d="M55.5 480V446" stroke="#0a84ff" strokeWidth="3" />
    <path d="M52 451L55.5 440L59 451z" fill="#0a84ff" />
    <path d="M55 480H12" stroke="#00ff00" strokeWidth="3" />
    <path d="M6 480L13 476V484z" fill="#00ff00" />
    <path d="M33 452L41 462M41 452L33 462" stroke="#e00000" fill="none" shapeRendering="geometricPrecision" />
    <path d="M10 467L14 472L18 467M14 472V477" stroke="#00ff00" fill="none" shapeRendering="geometricPrecision" />
  </CanvasSvg>
);

export default function App() {
  return (
    <Page>
      <Global />
      <TitleBar>
        <Logo />
        <TitleText>广联达BIM土建算量软件 GCL2013 - [C:\Users\Administrator.PC-20141127NRHM\Desktop\联城门房.GCL10]</TitleText>
        <WinControls>
          <WinBtn $w={46}><svg width="10" height="2"><path d="M0 1h10" stroke="#111" /></svg></WinBtn>
          <WinBtn $w={46}><svg width="11" height="11" viewBox="0 0 11 11"><path d="M.5 2.5h8v8h-8zM2.5 2.5v-2h8v8h-2" fill="none" stroke="#111" /></svg></WinBtn>
          <WinBtn $w={46}><svg width="11" height="11" viewBox="0 0 11 11"><path d="M.5.5l10 10M10.5.5l-10 10" fill="none" stroke="#111" /></svg></WinBtn>
        </WinControls>
      </TitleBar>

      <MenuBar>
        {MENU.map(([t, w]) => <MenuItem key={t} $w={w}>{t}</MenuItem>)}
        <svg width="16" height="16" viewBox="0 0 16 16">
          <path d="M8 1a7 6 0 0 1 7 6c0 3-1 6-3 7-1 1-2 0-2 0H6s-1 1-2 0c-2-1-3-4-3-7a7 6 0 0 1 7-6z" fill="#3a9be8" />
          <circle cx="5.5" cy="7" r="1.6" fill="#fff" /><circle cx="10.5" cy="7" r="1.6" fill="#fff" />
        </svg>
        <MenuItem $ml={4}>广小二</MenuItem>
        <MenuSep />
        <Tip>为什么绘图输</Tip>
        <MenuItem $ml={122}>07298339</MenuItem>
        <Caret $ml={8} />
        <MenuItem $ml={3}>造价豆:0</MenuItem>
        <IconSlot $ml={6}>
          <svg width="14" height="16" viewBox="0 0 14 16"><path d="M7 1c3 0 4 3 4 6s1 4 3 5H0c2-1 3-2 3-5s1-6 4-6zM5 13h4l-2 3z" fill="#5b9be0" /></svg>
        </IconSlot>
        <IconSlot $ml={6}>
          <svg width="16" height="16" viewBox="0 0 16 16"><path d="M1 2h14v10H8l-3 3v-3H1z" fill="#fff" stroke="#5b9be0" /><path d="M4 7h1M7 7h1M10 7h1" stroke="#888" /></svg>
        </IconSlot>
        <MenuItem $ml={4}>我要建议</MenuItem>
      </MenuBar>

      <Band $h={30} $pt={1}>
        <Grip $ml={3} />
        <IconSlot $ml={5}><Ico n="doc" /></IconSlot>
        <IconSlot $ml={6}><Ico n="open" /></IconSlot><Caret $ml={5} />
        <IconSlot $ml={3}><Ico n="save" /></IconSlot>
        <Sep $ml={6} />
        <IconSlot $ml={7}><Ico n="undo" /></IconSlot><Caret $ml={3} />
        <IconSlot $ml={3}><Ico n="redo" /></IconSlot><Caret $ml={5} $off />
        <Grip $ml={13} />
        <ToolC i="define" t="定义" ml={8} />
        <Sep $ml={7} />
        <ToolC i="sigma" t="汇总计算" ml={6} />
        <ToolC i="cloud" t="云检查" ml={6} />
        <Sep $ml={6} />
        <ToolC i="glasses" t="查看工程量" ml={6} />
        <ToolC i="calc" t="查看计算式" ml={7} />
        <ToolC i="batch" t="批量选择" ml={7} off />
        <ToolC i="flat" t="平齐板顶" ml={7} />
        <Grip $ml={8} />
        <ComboC t="当前楼层" w={78} ml={4} />
        <ToolC i="cube" t="俯视" ml={6} /><Caret $ml={6} />
        <ToolC i="view3d" t="三维" ml={2} />
        <ToolC i="part3d" t="局部三维" ml={6} />
        <Sep $ml={6} />
        <ToolC i="full" t="全屏" ml={6} />
        <ToolC i="zoom" t="缩放" ml={7} /><Caret $ml={7} />
        <ToolC i="pan" t="平移" />
        <Caret $ml={7} />
        <ToolC i="spin" t="屏幕旋转" /><Caret $ml={7} />
        <Sep />
        <ToolC i="display" t="构件图元显示设置" ml={5} />
      </Band>

      <Main>
        <Side $w={200}>
          <PanelHead $active>模块导航栏<Pin /></PanelHead>
          <NavBtn>工程设置</NavBtn>
          <NavBtn>绘图输入</NavBtn>
          <NavBody>
            <ExpandBar>
              <ExpandBtn><svg width="9" height="9"><path d="M0 4.5h9M4.5 0v9" stroke="#3a86c4" strokeWidth="2" /></svg></ExpandBtn>
              <ExpandBtn><svg width="9" height="9"><path d="M0 4.5h9" stroke="#3a86c4" strokeWidth="2" /></svg></ExpandBtn>
            </ExpandBar>
            <TreeBox>
              {TREE.map(r => (
                <React.Fragment key={r.t}>
                  <TreeRow>
                    <Chevron dir={r.open ? "down" : "right"} c={r.open ? "#555" : "#aaa"} />
                    <LeadH $w={4} $ml={3} />
                    <FolderIcon open={r.open} />
                    <TreeLabel $ml={6}>{r.t}</TreeLabel>
                  </TreeRow>
                  {r.kids && (
                    <Group>
                      {r.kids.map((k, i) => (
                        <ChildRow key={i}>
                          <LeadH $w={12} />
                          <ChildPlate $sel={k.sel}>
                            {k.i}
                            <TreeLabel $ml={5}>{k.l}</TreeLabel>
                          </ChildPlate>
                        </ChildRow>
                      ))}
                    </Group>
                  )}
                </React.Fragment>
              ))}
              <TreeRow>
                <Chevron dir="right" c="#aaa" />
                <LeadH $w={4} $ml={3} />
                <FolderIcon />
                <TreeLabel $ml={6}><Lat>CAD</Lat>识别</TreeLabel>
              </TreeRow>
            </TreeBox>
          </NavBody>
          <NavBtn>表格输入</NavBtn>
          <NavBtn>报表预览</NavBtn>
        </Side>

        <Side $w={194} $ml={4}>
          <PanelHead>构件列表<Pin /></PanelHead>
          <ListPanel>
            <MiniBar>
              <Ico n="newb" />
              <Tool $ml={4}><span>新建</span></Tool><Caret $ml={3} />
              <IconSlot $ml={6}><Ico n="del" /></IconSlot>
              <IconSlot $ml={8}><Ico n="copy" /></IconSlot>
              <IconSlot $ml={7}><Ico n="filter" /></IconSlot>
              <Tool $ml={2}><span>过滤</span></Tool><Caret $ml={3} />
            </MiniBar>
            <SearchRow>
              <SearchInput>搜索构件...</SearchInput>
              <SearchBtn><Ico n="mag" /></SearchBtn>
            </SearchRow>
            <ListGrid>
              <ListRow $h={21}><IndexCell $head /><NameHead>构件名称</NameHead></ListRow>
              <ListRow $h={19}><IndexCell>1</IndexCell><NameCell>KL-1</NameCell></ListRow>
              <ListRow $h={19}><IndexCell>2</IndexCell><NameCell>KL-2 (1a)</NameCell></ListRow>
              <ListRow $h={19}><IndexCell $sel>3</IndexCell><NameCell $sel>XL-2</NameCell></ListRow>
            </ListGrid>
          </ListPanel>
          <Gap />
          <PanelHead>属性编辑框<Pin /></PanelHead>
          <PropBox>
            <PropRows>
              <PropRow>
                <HeadLabel>属性名称</HeadLabel>
                <HeadValue>属性值</HeadValue>
                <HeadLabel $pl={1}>附加</HeadLabel>
              </PropRow>
              {PROPS.map(p => (
                <PropRow key={p.l}>
                  <PropLabel $tone={p.tl}>{p.l}</PropLabel>
                  <PropValue $tone={p.tv} $bg={p.bg}>{p.v}</PropValue>
                  <PropCheck><Check /></PropCheck>
                </PropRow>
              ))}
            </PropRows>
            <VScroll>
              <ScrollArrow><Chevron dir="up" c="#666" /></ScrollArrow>
              <VThumb />
              <ScrollArrow $auto><Chevron dir="down" c="#666" /></ScrollArrow>
            </VScroll>
            <HScroll>
              <HArrow><Chevron dir="left" c="#666" /></HArrow>
              <HThumb />
              <HArrow $auto><Chevron dir="right" c="#666" /></HArrow>
            </HScroll>
            <Corner />
          </PropBox>
        </Side>

        <Work>
          <Band $h={29} $tone="#f0f0f0">
            <Grip $ml={3} />
            <ComboC t="首层" w={56} ml={1} />
            <ComboC t="梁" w={69} ml={4} />
            <ComboC t="梁" w={69} ml={4} />
            <ComboC t="XL-2" w={69} ml={4} />
            <ComboC t="分层1" w={71} ml={4} />
            <Sep $ml={5} />
            <ToolC i="prop" t="属性" ml={3} w={51} pl={4} on />
            <ToolC i="list" t="构件列表" w={75} pl={4} on />
            <ToolC i="pick" t="拾取构件" ml={3} />
            <Grip $ml={6} />
            <ToolC i="two" t="两点" ml={8} />
            <ToolC i="par" t="平行" ml={7} />
            <ToolC i="lenm" t="长度标注" ml={7} />
            <ToolC i="alim" t="对齐标注" ml={7} />
            <ToolC i="meas" t="测量距离" ml={7} />
            <Sep $ml={5} />
          </Band>
          <Band $h={28} $tone="#f0f0f0">
            <Grip $ml={1} />
            <ToolC i="select" t="选择" ml={1} w={51} pl={4} on />
            <Caret $ml={2} />
            <Sep />
            <ToolC i="line" t="直线" ml={6} />
            <ToolC i="addl" t="点加长度" ml={7} />
            <ToolC i="arc" t="三点画弧" ml={7} />
            <Caret $ml={7} />
            <ComboC t="" w={54} />
            <ToolC i="rect" t="矩形" ml={5} />
            <Sep $ml={6} />
            <ToolC i="smart" t="智能布置" ml={5} />
            <Caret $ml={5} />
            <Sep $ml={2} />
            <ToolC i="arch" t="设置拱梁" ml={6} />
            <Caret $ml={7} />
            <ToolC i="haunch" t="设置单跨加腋" />
            <Caret $ml={8} />
            <ToolC i="auto" t="自动生成土方" />
            <ToolC i="rib" t="画线布置次肋梁" ml={7} />
            <Overflow>&gt;&gt;</Overflow>
          </Band>
          <WorkMid>
            <VBar>
              <VGrip />
              <VIcon $mt={5}><Ico n="brush" /></VIcon>
              <VSep $mt={6} />
              <VIcon $mt={6}><Ico n="circ" /></VIcon>
              <VIcon $mt={6}><Ico n="mirror" /></VIcon>
              <VSep $mt={5} />
              <VIcon $mt={6}><Ico n="move" /></VIcon>
              <VIcon $mt={6}><Ico n="rot" /></VIcon>
              <VSep $mt={6} />
              <VIcon $mt={7}><Ico n="ext" /></VIcon>
              <VText $mt={2}>延伸</VText>
              <VIcon $mt={8}><Ico n="trim" /></VIcon>
              <VText $mt={2}>修剪</VText>
              <VSep $mt={8} />
              <VIcon $mt={4}><Ico n="brk" /></VIcon>
              <VText $mt={4}>打断</VText>
              <LeftTri />
              <VIcon $mt={9}><Ico n="merge" /></VIcon>
              <VText $mt={2}>合并</VText>
              <VIcon $mt={8}><Ico n="split" /></VIcon>
              <VText $mt={4} $off>分割</VText>
              <VSep $mt={4} />
              <VIcon $mt={6}><Ico n="align" /></VIcon>
              <VText $mt={3}>对齐</VText>
              <LeftTri $mt={1} />
              <VIcon $mt={8}><Ico n="offs" /></VIcon>
              <VText $mt={5}>偏移</VText>
              <More $mt={10}>&gt;&gt;</More>
            </VBar>
            <Canvas />
          </WorkMid>
          <Band $h={32} $tone="#f0f0f0">
            <Grip $ml={3} />
            <ComboC t="不偏移" w={56} ml={1} off />
            <Sep $ml={4} />
            <Label $w={16} $ml={2}>X=</Label>
            <SpinC v="0" w={55} ml={5} />
            <Label $w={22} $ml={3}>mm</Label>
            <Label $w={16} $ml={5}>Y=</Label>
            <SpinC v="0" w={53} ml={3} />
            <Label $w={22} $ml={5}>mm</Label>
            <Sep $ml={3} />
            <SmallBox $ml={4} />
            <Label $w={24} $ml={7} $tone="#222">旋转</Label>
            <SpinC v="0.000" w={57} ml={5} />
            <Label $w={5} $ml={13}>°</Label>
            <Grip $ml={69} />
            <ToolC i="ortho" t="正交" ml={5} />
            <ToolC i="cross" t="交点" ml={6} />
            <ToolC i="perp" t="垂点" ml={6} w={49} pl={2} on />
            <ToolC i="mid" t="中点" w={51} pl={4} on />
            <ToolC i="vert" t="顶点" ml={4} />
            <ToolC i="coord" t="坐标" ml={7} />
          </Band>
        </Work>
      </Main>

      <Status>
        <StatusCell $w={150}><Lat>X=14583 Y=2998</Lat></StatusCell>
        <StatusCell $w={80}>层高<Lat>:3m</Lat></StatusCell>
        <StatusCell $w={130}>建筑底标高<Lat>:-0.05m</Lat></StatusCell>
        <StatusCell $w={50}><Lat>0</Lat></StatusCell>
        <StatusCell $w={250} />
        <StatusCell $w={486} />
        <StatusCell $w={70}><Lat>767.4FPS</Lat></StatusCell>
      </Status>

      <Taskbar>
        <StartBtn>
          <svg width="17" height="17" viewBox="0 0 17 17"><path d="M0 2.4L7 1.4V8H0zM8 1.2L17 0V8H8zM0 9h7v6.6L0 14.6zM8 9h9v8l-9-1.2z" fill="#fff" /></svg>
        </StartBtn>
        <SearchBox>
          <Ring />
          <SearchHint>在这里输入你要搜索的内容</SearchHint>
          <svg width="12" height="17" viewBox="0 0 12 17"><path d="M4 1h4v9H4zM1 7c0 6 10 6 10 0M6 12v4M3 16h6" fill="none" stroke="#aaa" /></svg>
        </SearchBox>
        <Slot><svg width="20" height="14" viewBox="0 0 20 14"><path d="M5.5 .5h9v13h-9zM2.5 2.5H.5v9h2M17.5 2.5h2v9h-2" fill="none" stroke="#fff" /></svg></Slot>
        <Slot><svg width="22" height="22" viewBox="0 0 22 22"><path d="M11 11C6 10 2 7 5 3c3-3 8-2 7 4zM11 11c1-5 4-9 8-6 3 3 2 8-4 7zM11 11c5 1 9 4 6 8-3 3-8 2-7-4zM11 11c-1 5-4 9-8 6-3-3-2-8 4-7z" fill="#e6eaea" /></svg></Slot>
        <Slot $ml={3}><FaInternetExplorer size={22} color="#e8e8e8" /></Slot>
        <Slot $ml={1}><svg width="20" height="22" viewBox="0 0 20 22"><path d="M16 5C12 1 5 2 3 8s2 12 8 12 7-8 2-9-6 4-3 5" fill="none" stroke="#b8b8b8" strokeWidth="1.8" /></svg></Slot>
        <Slot $ml={5}><FaEdge size={22} color="#0a78d4" /></Slot>
        <Slot $ml={-1}>
          <svg width="24" height="24" viewBox="0 0 24 24">
            <path d="M2 7h20v16H2z" fill="#fff" /><path d="M8 7c0-6 8-6 8 0" fill="none" stroke="#fff" strokeWidth="1.5" />
            <rect x="7" y="10" width="4.5" height="4.5" fill="#f25022" /><rect x="12.5" y="10" width="4.5" height="4.5" fill="#7fba00" /><rect x="7" y="15.5" width="4.5" height="4.5" fill="#00a4ef" /><rect x="12.5" y="15.5" width="4.5" height="4.5" fill="#ffb900" />
          </svg>
        </Slot>
        <Slot>
          <svg width="20" height="22" viewBox="0 0 20 22">
            <path d="M1 1h18v20H1z" fill="#f7d774" /><path d="M1 1h18v4H1z" fill="#ead08a" /><path d="M4 14h12v7H4z" fill="#3a9ad8" /><path d="M8 17h4v4H8z" fill="#f7d774" />
          </svg>
        </Slot>
        <Slot><FaInternetExplorer size={24} color="#2c9ae0" /></Slot>
        <Slot $under>
          <svg width="22" height="24" viewBox="0 0 22 24"><path d="M18 4C12-1 2 3 2 12s7 11 12 10 7-8 2-10-9 2-6 5" fill="none" stroke="#1e9ae8" strokeWidth="3.5" /></svg>
        </Slot>
        <Slot $under>
          <svg width="24" height="28" viewBox="0 0 24 28"><rect width="24" height="28" rx="4" fill="#0c8fe6" /><path d="M12 5v18M12 15H8a3 3 0 0 1-2-5M12 15h4a3 3 0 0 0 2-5M9 23h6" fill="none" stroke="#fff" strokeWidth="2.2" /></svg>
        </Slot>
        <Slot $under>
          <svg width="22" height="24" viewBox="0 0 22 24"><ellipse cx="11" cy="12" rx="10" ry="11" fill="#78c830" stroke="#b8e080" /><path d="M4 13h14M17 9a6 6 0 0 0-12 3c0 5 7 7 11 3" fill="none" stroke="#fff" strokeWidth="2.2" /></svg>
        </Slot>
        <Slot $under>
          <svg width="24" height="26" viewBox="0 0 24 26"><rect width="24" height="26" rx="2" fill="#f09a1c" /><path d="M4 4l14-1 2 18-14 1z" fill="#fbe6b0" /><path d="M7 8h8M7 12h8M7 16h6" stroke="#c07820" /><path d="M14 16L22 2" stroke="#d03a1a" strokeWidth="2" /></svg>
        </Slot>
        <Slot $active><Logo s={24} /></Slot>
        <Tray $ml={70} $w={14}><svg width="12" height="7" viewBox="0 0 12 7"><path d="M0 6.5l6-6 6 6" fill="none" stroke="#fff" /></svg></Tray>
        <Tray $ml={11} $w={14}><svg width="13" height="13" viewBox="0 0 13 13"><path d="M1 12A11 11 0 0 1 12 1M4 12A8 8 0 0 1 12 4M7 12a5 5 0 0 1 5-5" fill="none" stroke="#ddd" strokeDasharray="1.2 .6" /><circle cx="11" cy="11" r="1.4" fill="#fff" /></svg></Tray>
        <Tray $ml={7} $w={24}><svg width="23" height="13" viewBox="0 0 23 13"><rect x=".5" y=".5" width="22" height="12" fill="none" stroke="#fff" /><path d="M3 4h17M3 7h17M6 10h11" stroke="#fff" strokeDasharray="2 1" /></svg></Tray>
        <Tray $ml={8} $w={16}><Han>中</Han></Tray>
        <Tray $ml={13} $w={18}>
          <svg width="16" height="16" viewBox="0 0 16 16"><rect x="1" y="1" width="14" height="14" rx="2.5" fill="#f04e14" transform="rotate(-12 8 8)" /><path d="M11 5.5H7a1.5 1.5 0 0 0 0 3h2a1.5 1.5 0 0 1 0 3H5" fill="none" stroke="#fff" strokeWidth="2" /></svg>
        </Tray>
        <Clock><div>22:13</div><div>2017/11/28</div></Clock>
        <Notify>
          <svg width="16" height="13" viewBox="0 0 16 13"><path d="M0 0h16v13H0z" fill="#f4f4f4" /><path d="M2 3h12M2 6h12M2 9h9" stroke="#222" /></svg>
          <Badge>20</Badge>
        </Notify>
      </Taskbar>

      <SogouLogo>S</SogouLogo>
      <SogouBar>
        <SogouEn>英</SogouEn>
        <SogouItem $w={24}>•，</SogouItem>
        <SogouItem $w={26}><FaRegSmile size={17} /></SogouItem>
        <SogouItem $w={18}><FaMicrophone size={15} /></SogouItem>
        <SogouItem $w={26}><FaKeyboard size={17} /></SogouItem>
        <SogouItem $w={20}><FaUser size={13} color="#aab4bd" /></SogouItem>
        <SogouItem $w={22}><FaTshirt size={16} /></SogouItem>
        <SogouItem $w={20}><FaWrench size={14} /></SogouItem>
      </SogouBar>
      <NetPill>
        <NetBall>64%</NetBall>
        <NetArrow $top={6} $c="#d04040">↑</NetArrow>
        <NetArrow $top={23} $c="#2a9a3a">↓</NetArrow>
        <div>0K/s</div>
        <div>0K/s</div>
        <NetPlus>+</NetPlus>
        <NetDot />
      </NetPill>

      <Ellipse viewBox="0 0 260 95">
        <ellipse cx="131" cy="47" rx="117" ry="34" fill="none" stroke="#f00000" strokeWidth="7" />
      </Ellipse>
    </Page>
  );
}
